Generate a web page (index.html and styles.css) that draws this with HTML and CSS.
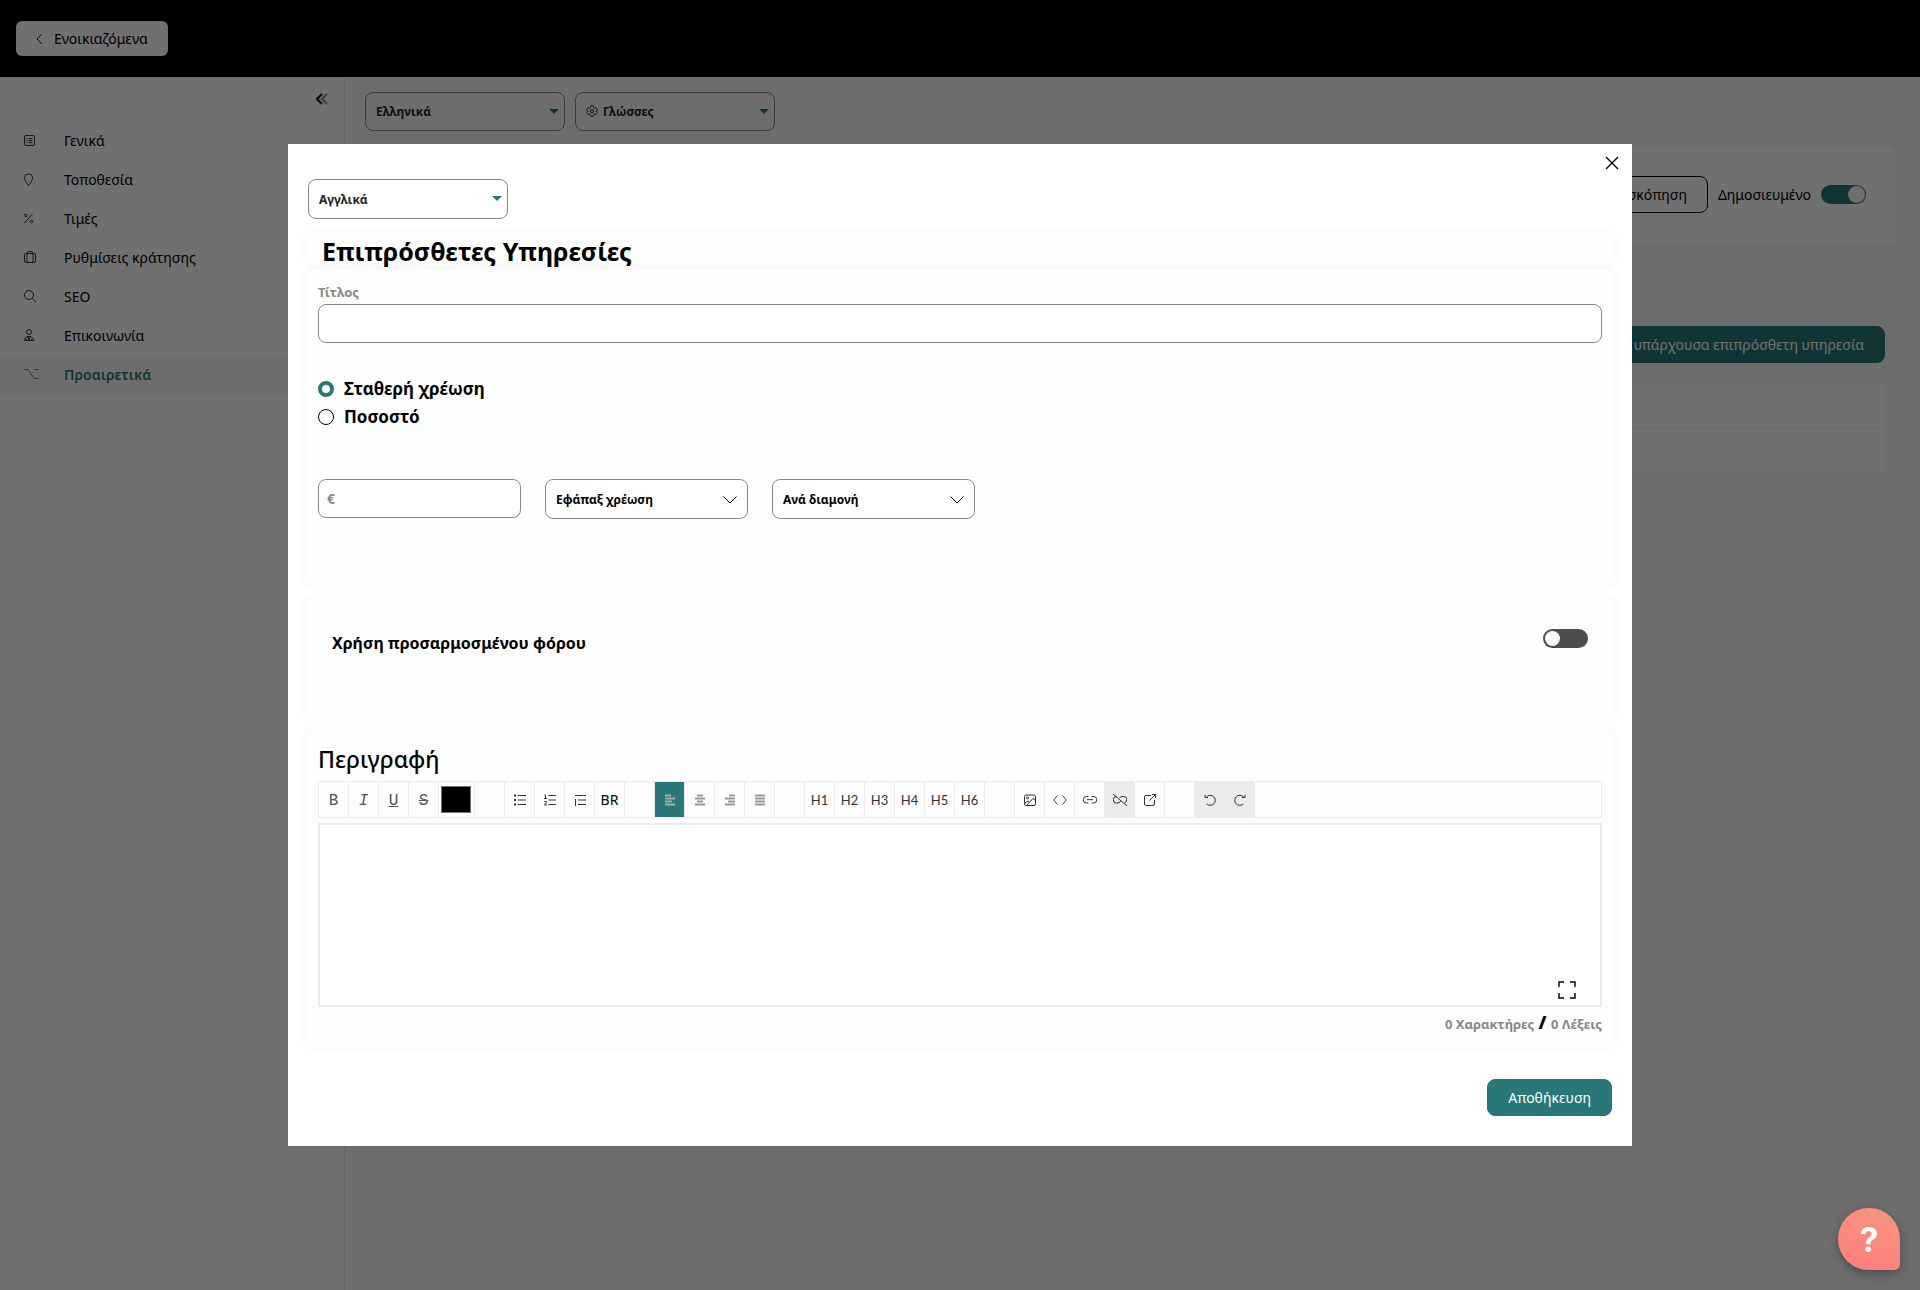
FILE: index.html
```html
<!DOCTYPE html>
<html lang="el">
<head>
  <meta charset="UTF-8">
  <meta name="viewport" content="width=device-width, initial-scale=1.0">
  <title>Επιπρόσθετες Υπηρεσίες</title>
  <link rel="stylesheet" href="styles.css">
</head>
<body>
  <div class="page">
    <header class="topbar">
      <button type="button" class="back-btn">
        <svg width="8" height="12" viewBox="0 0 8 12"><path d="M6 1 1 6l5 5"/></svg>
        Ενοικιαζόμενα
      </button>
    </header>

    <div class="layout">
      <nav class="sidebar">
        <button type="button" class="collapse-btn" aria-label="Σύμπτυξη μενού">
          <svg width="12" height="12" viewBox="0 0 12 12"><path class="far" d="M11 1 6 6l5 5"/><path class="near" d="M6 1 1 6l5 5"/></svg>
        </button>
        <ul class="menu">
          <li><a href="#general">
            <svg viewBox="0 0 16 16"><rect x=".5" y="2.5" width="10" height="10" rx="1.5"/><path d="M2.500 5.500h1M4.500 5.500h4M2.500 7.500h1M4.500 7.500h4M2.500 9.500h1M4.500 9.500h4"/></svg>
            Γενικά</a></li>
          <li><a href="#location">
            <svg viewBox="0 0 16 16"><path d="M4.500 13.500C2 10 .5 8 .5 5.800a4 4 0 0 1 8 0C8.500 8 7 10 4.500 13.500z"/></svg>
            Τοποθεσία</a></li>
          <li><a href="#prices">
            <svg viewBox="0 0 16 16"><path d="M8.500 3 .5 12"/><circle cx="1.800" cy="4.500" r="1.300"/><circle cx="7.500" cy="10.500" r="1.300"/></svg>
            Τιμές</a></li>
          <li><a href="#booking">
            <svg viewBox="0 0 16 16"><rect x=".5" y="3.500" width="11" height="9" rx="1.500"/><path d="M3 12.500v-9a2 2 0 0 1 2-2h2a2 2 0 0 1 2 2v9"/></svg>
            Ρυθμίσεις κράτησης</a></li>
          <li><a href="#seo">
            <svg viewBox="0 0 16 16"><circle cx="5" cy="6" r="4.500"/><path d="m8.500 9.500 3.500 3.500"/></svg>
            SEO</a></li>
          <li><a href="#contact">
            <svg viewBox="0 0 16 16"><circle cx="5" cy="4" r="2.500"/><path d="M.5 12.500V12q0-2.500 3-3.500h3q3 1 3 3.500v.5zM3.500 8.500l1.500 3 1.500-3M5 9v3M2.500 11v1M7.500 11v1"/></svg>
            Επικοινωνία</a></li>
          <li class="active"><a href="#optional">
            <svg viewBox="0 0 16 16"><path d="M0 2.500h4l6 9h5M10.500 2.500h4.500"/></svg>
            Προαιρετικά</a></li>
        </ul>
      </nav>

      <main class="content">
        <div class="languages">
          <div class="select-box">
            <select aria-label="Γλώσσα"><option>Ελληνικά</option></select>
          </div>
          <div class="select-box with-icon">
            <svg class="gear" width="12" height="12" viewBox="0 0 12 12"><path d="M4.800.8h2.400l.4 1.500 1 .6 1.500-.5 1.200 2.100L10.200 6l1.100 1.500-1.200 2.100-1.500-.5-1 .6-.4 1.500H4.800l-.4-1.500-1-.6-1.500.5L.7 7.500 1.800 6 .7 4.500l1.200-2.100 1.500.5 1-.6z"/><circle cx="6" cy="6" r="1.600"/></svg>
            <select aria-label="Γλώσσες"><option>Γλώσσες</option></select>
          </div>
        </div>

        <div class="card status-card">
          <button type="button" class="outline-btn">Προεπισκόπηση</button>
          <label for="published">Δημοσιευμένο</label>
          <input type="checkbox" id="published" class="toggle" checked>
        </div>

        <div class="services">
          <button type="button" class="primary-btn">Προσθήκη από υπάρχουσα επιπρόσθετη υπηρεσία</button>
          <div class="service-row"></div>
          <div class="service-row"></div>
        </div>
      </main>
    </div>
  </div>

  <div class="overlay">
    <form class="modal" role="dialog" aria-labelledby="modal-title">
      <button type="button" class="close-btn" aria-label="Κλείσιμο">
        <svg width="14" height="14" viewBox="0 0 14 14"><path d="m1 1 12 12M13 1 1 13"/></svg>
      </button>

      <div class="select-box modal-language">
        <select aria-label="Γλώσσα υπηρεσίας"><option>Αγγλικά</option></select>
      </div>

      <div class="card title-card">
        <h1 id="modal-title">Επιπρόσθετες Υπηρεσίες</h1>
      </div>

      <section class="card charge-card">
        <label class="field-label" for="service-title">Τίτλος</label>
        <input type="text" id="service-title" class="text-input">

        <div class="radios">
          <label><input type="radio" name="charge" checked> Σταθερή χρέωση</label>
          <label><input type="radio" name="charge"> Ποσοστό</label>
        </div>

        <div class="price-row">
          <input type="text" class="text-input" placeholder="€" aria-label="Τιμή">
          <div class="select-box chevron">
            <select aria-label="Τύπος χρέωσης"><option>Εφάπαξ χρέωση</option></select>
            <svg width="14" height="8" viewBox="0 0 14 8"><path d="m.5.5 6.500 6.500 6.500-6.500"/></svg>
          </div>
          <div class="select-box chevron">
            <select aria-label="Βάση χρέωσης"><option>Ανά διαμονή</option></select>
            <svg width="14" height="8" viewBox="0 0 14 8"><path d="m.5.5 6.500 6.500 6.500-6.500"/></svg>
          </div>
        </div>
      </section>

      <section class="card tax-card">
        <label for="custom-tax">Χρήση προσαρμοσμένου φόρου</label>
        <input type="checkbox" id="custom-tax" class="toggle">
      </section>

      <section class="card description-card">
        <h2>Περιγραφή</h2>
        <div class="toolbar">
          <button type="button" class="letter">B</button>
          <button type="button" class="letter italic">I</button>
          <button type="button" class="letter underline">U</button>
          <button type="button" class="letter strike">S</button>
          <span class="color-cell"><input type="color" value="#000000" aria-label="Χρώμα"></span>
          <span class="spacer"></span>
          <button type="button" aria-label="Λίστα"><svg viewBox="0 0 12 12"><path d="M3.500 1.500H12M3.500 6H12M3.500 10.500H12"/><path class="thick" d="M0 1.500h2M0 6h2M0 10.500h2"/></svg></button>
          <button type="button" aria-label="Αριθμημένη λίστα"><svg viewBox="0 0 12 12"><path d="M4.500 1.500H12M4.500 6H12M4.500 10.500H12M.5 1h1v4M0 4.500h3M.5 7.500h2v1.200L.5 11h2.500"/></svg></button>
          <button type="button" aria-label="Εσοχή"><svg viewBox="0 0 12 12"><path d="M1 1.500h11M4 6h8M4 10.500h8M1.500 5v7"/></svg></button>
          <button type="button" class="br">BR</button>
          <span class="spacer"></span>
          <button type="button" class="align active" aria-label="Αριστερά"><svg viewBox="0 0 12 12"><path d="M1 1.500h6M1 4.500h10M1 7.500h7M1 10.500h10"/></svg></button>
          <button type="button" class="align" aria-label="Κέντρο"><svg viewBox="0 0 12 12"><path d="M3 1.500h6M1 4.500h10M3 7.500h6M1 10.500h10"/></svg></button>
          <button type="button" class="align" aria-label="Δεξιά"><svg viewBox="0 0 12 12"><path d="M5 1.500h6M1 4.500h10M4 7.500h7M1 10.500h10"/></svg></button>
          <button type="button" class="align" aria-label="Πλήρης στοίχιση"><svg viewBox="0 0 12 12"><path d="M1 1.500h10M1 4.500h10M1 7.500h10M1 10.500h10"/></svg></button>
          <span class="spacer"></span>
          <button type="button" class="heading">H1</button>
          <button type="button" class="heading">H2</button>
          <button type="button" class="heading">H3</button>
          <button type="button" class="heading">H4</button>
          <button type="button" class="heading">H5</button>
          <button type="button" class="heading">H6</button>
          <span class="spacer"></span>
          <button type="button" aria-label="Εικόνα"><svg viewBox="0 0 12 12"><rect x=".5" y="1" width="11" height="10.500" rx="1.500"/><circle cx="3.500" cy="3.800" r="1"/><path d="M.5 9.500 4 7l1.500 1.200L9 4.500l2.500 2M2.500 11.500l3-3.300"/></svg></button>
          <button type="button" aria-label="Κώδικας"><svg class="wide" viewBox="0 0 14 12"><path d="M4.500 1.500 0.700 6l3.800 4.500M9.500 1.500 13.300 6 9.500 10.500"/></svg></button>
          <button type="button" aria-label="Σύνδεσμος"><svg class="wide" viewBox="0 0 14 12"><path d="M5.500 2.500h-2a3.200 3.200 0 0 0 0 6.500h2M8.500 2.500h2a3.200 3.200 0 0 1 0 6.500h-2M4 5.700h6"/></svg></button>
          <button type="button" class="muted" aria-label="Αφαίρεση συνδέσμου" disabled><svg class="wide" viewBox="0 0 14 12"><path d="M3.500 2.500A3.200 3.200 0 0 0 3.500 9H5q2 0 2.500-2M6.500 4Q7.500 2.500 9 2.500h1.500a3.200 3.200 0 0 1 1 6.300M0 0l14 12"/></svg></button>
          <button type="button" aria-label="Άνοιγμα"><svg viewBox="0 0 12 12"><path d="M7 1.500H2a1.500 1.500 0 0 0-1.500 1.500v7A1.500 1.500 0 0 0 2 11.500h7a1.500 1.500 0 0 0 1.500-1.500V6M8 .5h3.500V4M11.500.5 5.500 6.500"/></svg></button>
          <span class="spacer"></span>
          <button type="button" class="muted" aria-label="Αναίρεση" disabled><svg viewBox="0 0 12 12"><path d="M2.500 3a5 5 0 1 1 .2 6.800M1 .8v2.700h3"/></svg></button>
          <button type="button" class="muted" aria-label="Επανάληψη" disabled><svg viewBox="0 0 12 12"><path d="M9.500 3a5 5 0 1 0-.2 6.800M11 .8v2.700H8"/></svg></button>
        </div>
        <div class="editor">
          <textarea aria-label="Περιγραφή"></textarea>
          <button type="button" class="fullscreen-btn" aria-label="Πλήρης οθόνη">
            <svg width="18" height="18" viewBox="0 0 18 18"><path d="M1 6V1h5M12 1h5v5M17 12v5h-5M6 17H1v-5"/></svg>
          </button>
        </div>
        <p class="counter">0 Χαρακτήρες <b>/</b> 0 Λέξεις</p>
      </section>

      <div class="actions">
        <button type="submit" class="primary-btn">Αποθήκευση</button>
      </div>
    </form>
  </div>

  <button type="button" class="help-btn" aria-label="Βοήθεια">?</button>
</body>
</html>
```

FILE: styles.css
```css
* {
  box-sizing: border-box;
}

body {
  margin: 0;
  font-family: "Noto Sans", sans-serif;
  font-size: 14px;
  line-height: 20px;
  color: #000;
  background: #f9f9f9;
}

button,
input,
select,
textarea {
  font-family: inherit;
  color: inherit;
}

button {
  cursor: pointer;
}

svg {
  fill: none;
  stroke: currentColor;
  stroke-width: 1;
}

/* page */

.page {
  display: flex;
  flex-direction: column;
  min-height: 100vh;
}

.topbar {
  display: flex;
  align-items: center;
  height: 77px;
  padding: 0 16px;
  background: #000;
}

.back-btn {
  display: flex;
  align-items: center;
  gap: 10px;
  height: 35px;
  padding: 0 20px;
  border: none;
  border-radius: 6px;
  background: #fff;
  font-size: 14px;
}

.layout {
  display: flex;
  flex: 1;
}

.sidebar {
  width: 345px;
  border-right: 1px solid #e5e5e5;
  background: #fff;
}

.collapse-btn {
  display: flex;
  margin: 16px 16px 16px auto;
  padding: 0;
  border: none;
  background: none;
}

.collapse-btn .near {
  stroke-width: 2;
}

.collapse-btn .far {
  stroke: #888;
  stroke-width: 2;
}

.menu {
  margin: 0;
  padding: 0;
  list-style: none;
}

.menu a {
  display: flex;
  align-items: center;
  gap: 24px;
  height: 39px;
  padding-left: 24px;
  color: inherit;
  text-decoration: none;
}

.menu svg {
  width: 16px;
  height: 16px;
  opacity: 0.8;
}

.menu .active {
  background: #f9f9f9;
  color: #277876;
  font-weight: 600;
}

.content {
  flex: 1;
  padding: 15px 24px 24px 20px;
}

.languages {
  display: flex;
  gap: 10px;
}

.select-box {
  position: relative;
  width: 200px;
}

.select-box select {
  display: block;
  width: 100%;
  height: 40px;
  padding: 0 10px;
  border: 1px solid #888;
  border-radius: 8px;
  background: #fff;
  appearance: none;
  font-size: 12px;
  font-weight: 700;
  color: #222;
}

.select-box::after {
  content: "";
  position: absolute;
  top: 17px;
  right: 6px;
  border: 5px solid transparent;
  border-top-color: #277876;
  border-bottom: none;
}

.languages .select-box select {
  height: 39px;
  background: none;
}

.gear {
  position: absolute;
  top: 13px;
  left: 11px;
  opacity: 0.8;
}

.select-box.with-icon select {
  padding-left: 27px;
}

.card {
  border-radius: 8px;
  background: #fefefe;
  box-shadow: 0 0 0 7px rgba(0, 0, 0, 0.012);
}

.status-card {
  display: flex;
  align-items: center;
  justify-content: flex-end;
  gap: 10px;
  height: 97px;
  margin-top: 15px;
  padding-right: 30px;
}

.outline-btn,
.primary-btn {
  height: 37px;
  padding: 0 20px;
  border: 1px solid #000;
  border-radius: 8px;
  background: none;
  font-size: 14px;
}

.primary-btn {
  border-color: #277876;
  background: #277876;
  color: #fff;
}

.toggle {
  position: relative;
  width: 45px;
  height: 19px;
  margin: 0;
  border-radius: 10px;
  background: #4d4d4d;
  appearance: none;
}

.toggle::before {
  content: "";
  position: absolute;
  top: 2px;
  left: 2px;
  width: 15px;
  height: 15px;
  border-radius: 50%;
  background: #fafafa;
}

.toggle:checked {
  background: #277876;
}

.toggle:checked::before {
  top: 1px;
  right: 1px;
  left: auto;
  width: 17px;
  height: 17px;
}

.services {
  display: flex;
  flex-direction: column;
  margin-top: 83px;
  padding-right: 11px;
}

.services .primary-btn {
  align-self: flex-end;
  margin-bottom: 20px;
}

.service-row {
  height: 44px;
  margin-bottom: 2px;
  background: #fefefe;
}

/* modal */

.overlay {
  position: fixed;
  inset: 0;
  display: flex;
  align-items: center;
  justify-content: center;
  background: rgba(0, 0, 0, 0.56);
}

.modal {
  position: relative;
  width: 70%;
  padding: 35px 20px 30px;
  background: #fff;
}

.close-btn {
  position: absolute;
  top: 12px;
  right: 13px;
  display: flex;
  padding: 0;
  border: none;
  background: none;
}

.modal .card {
  margin-top: 15px;
  padding: 10px;
}

.modal .title-card {
  height: 29px;
  padding: 0 14px;
}

h1 {
  margin: 0;
  font-size: 25px;
  font-weight: 700;
  line-height: 34px;
}

.modal .charge-card {
  min-height: 314px;
  margin-top: 7px;
  padding-top: 12px;
}

.field-label {
  display: block;
  margin-bottom: 2px;
  font-size: 13px;
  font-weight: 700;
  color: #888;
}

.text-input {
  display: block;
  width: 100%;
  height: 39px;
  padding: 0 8px;
  border: 1px solid #888;
  border-radius: 8px;
  background: #fff;
  font-size: 14px;
  font-weight: 700;
}

.text-input::placeholder {
  color: #888;
  opacity: 1;
}

.radios {
  margin: 32px 0 48px;
}

.radios label {
  display: flex;
  align-items: center;
  gap: 10px;
  height: 28px;
  font-size: 17px;
  font-weight: 700;
}

.radios input {
  width: 16px;
  height: 16px;
  margin: 0;
  border: 1px solid #000;
  border-radius: 50%;
  appearance: none;
}

.radios input:checked {
  border: 4px solid #277876;
}

.price-row {
  display: flex;
  gap: 24px;
}

.price-row .text-input,
.price-row .select-box {
  width: 203px;
}

.chevron::after {
  display: none;
}

.chevron svg {
  position: absolute;
  top: 17px;
  right: 11px;
}

.chevron select {
  color: #000;
}

.modal .tax-card {
  display: flex;
  justify-content: space-between;
  min-height: 119px;
  padding: 30px 24px;
  font-size: 16px;
  font-weight: 700;
  line-height: 28px;
}

h2 {
  margin: 0 0 6px;
  font-size: 23px;
  font-weight: 500;
  line-height: 32px;
}

.toolbar {
  display: flex;
  height: 37px;
  border: 1px solid #ececec;
}

.toolbar button,
.toolbar .spacer {
  display: flex;
  align-items: center;
  justify-content: center;
  width: 30px;
  padding: 0;
  border: none;
  border-right: 1px solid #ececec;
  background: none;
  color: #333;
}

.toolbar svg {
  width: 12px;
  height: 12px;
}

.toolbar .wide {
  width: 14px;
}

.toolbar .thick {
  stroke-width: 2;
}

.toolbar .letter {
  padding-top: 2px;
  font-family: "Liberation Mono", monospace;
  font-size: 16px;
  color: #555;
}

.toolbar .italic {
  font-style: italic;
}

.toolbar .underline {
  text-decoration: underline;
}

.toolbar .strike {
  text-decoration: line-through;
}

.toolbar .br {
  font-size: 14px;
  color: #000;
}

.toolbar .heading {
  font-family: Lato, sans-serif;
  font-size: 13px;
}

.toolbar .align svg {
  stroke: #999;
  stroke-width: 2;
}

.toolbar .active {
  background: #277876;
}

.toolbar .active svg {
  stroke: #aaa;
}

.toolbar .muted {
  border-right-color: #ebebeb;
  background: #ebebeb;
}

.color-cell {
  display: flex;
  align-items: center;
  width: 36px;
  padding-left: 2px;
  border-right: 1px solid #ececec;
}

.color-cell input {
  width: 30px;
  height: 27px;
  padding: 0;
  border: 1px solid #767676;
  background: #000;
  appearance: none;
}

.color-cell input::-webkit-color-swatch-wrapper {
  padding: 0;
}

.color-cell input::-webkit-color-swatch {
  border: none;
}

.editor {
  position: relative;
  margin-top: 5px;
}

.editor textarea {
  display: block;
  width: 100%;
  height: 184px;
  border: 2px solid #ececec;
  background: #fff;
  resize: none;
}

.fullscreen-btn {
  position: absolute;
  right: 26px;
  bottom: 8px;
  display: flex;
  padding: 0;
  border: none;
  background: none;
}

.fullscreen-btn svg,
.close-btn svg {
  stroke-width: 1.4;
}

.counter {
  margin: 5px 0 0;
  font-size: 13px;
  font-weight: 700;
  line-height: 24px;
  text-align: right;
  color: #888;
}

.counter b {
  margin: 0 1px;
  font-size: 18px;
  line-height: 20px;
  color: #000;
}

.actions {
  display: flex;
  justify-content: flex-end;
  margin-top: 33px;
}

.help-btn {
  position: fixed;
  right: 20px;
  bottom: 20px;
  width: 62px;
  height: 62px;
  padding: 0;
  border: none;
  border-radius: 50% 50% 6px 50%;
  background: linear-gradient(20deg, #ff7d7d, #f5987c);
  box-shadow: 0 4px 10px rgba(0, 0, 0, 0.3);
  font-family: Inter, sans-serif;
  font-size: 34px;
  font-weight: 700;
  color: #fff;
}
```
